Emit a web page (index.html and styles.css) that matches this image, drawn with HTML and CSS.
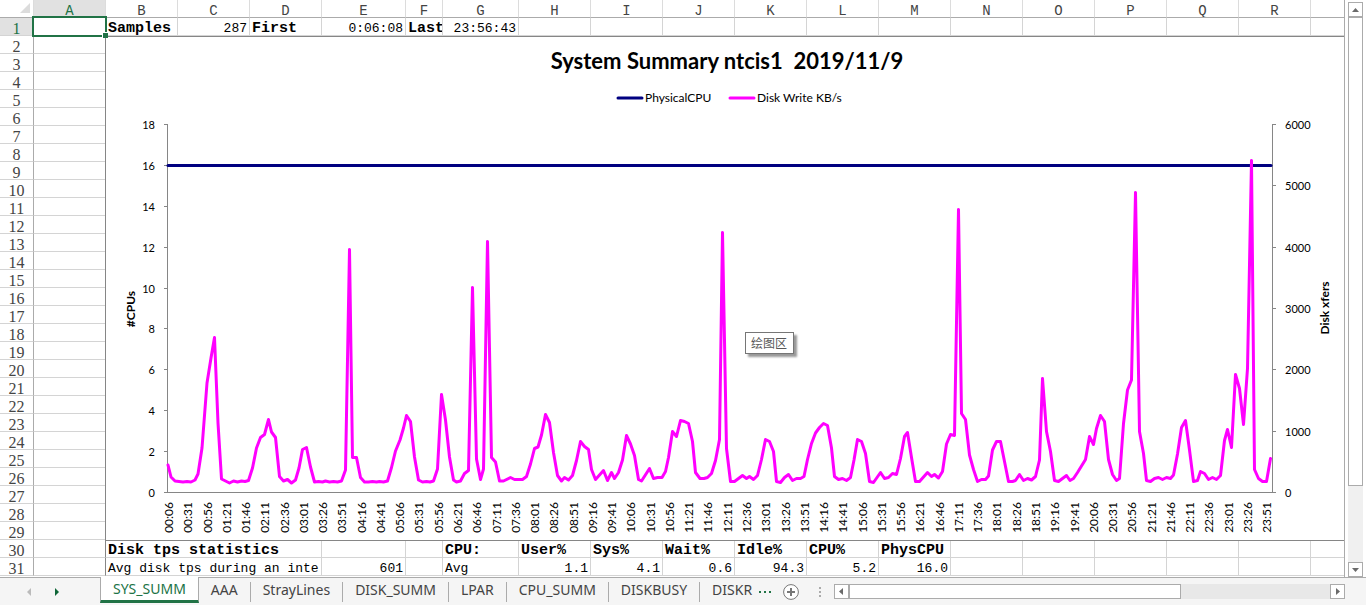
FILE: index.html
```html
<!DOCTYPE html>
<html lang="en">
<head>
<meta charset="utf-8">
<title>System Summary</title>
<link rel="stylesheet" href="styles.css">
</head>
<body>
<main class="workspace">
  <div class="sheet">
    <table class="grid">
      <colgroup>
        <col class="col-head"><col class="col"><col class="col"><col class="col"><col class="col">
        <col class="col-e"><col class="col-f"><col class="col-g">
        <col class="col"><col class="col"><col class="col"><col class="col"><col class="col"><col class="col">
        <col class="col"><col class="col"><col class="col"><col class="col"><col class="col"><col>
      </colgroup>
      <thead>
        <tr>
          <th class="corner"><svg class="corner-mark" viewBox="0 0 10 10" aria-hidden="true"><path d="M10 0V10H0Z"/></svg></th>
          <th class="active">A</th><th>B</th><th>C</th><th>D</th><th>E</th><th>F</th><th>G</th><th>H</th><th>I</th><th>J</th><th>K</th><th>L</th><th>M</th><th>N</th><th>O</th><th>P</th><th>Q</th><th>R</th><th></th>
        </tr>
      </thead>
      <tbody>
        <tr>
          <th class="active">1</th><td class="selected"><span class="selection"></span></td>
          <td class="bold">Samples</td><td class="num">287</td><td class="bold">First</td><td class="num">0:06:08</td><td class="bold">Last</td><td class="num">23:56:43</td>
          <td></td><td></td><td></td><td></td><td></td><td></td><td></td><td></td><td></td><td></td><td></td><td></td>
        </tr>
        <tr>
          <th>2</th><td></td>
          <td class="chart-cell" rowspan="28" colspan="18">
            <div class="chart">
              <svg class="plot" viewBox="106 37 1238 503" role="img" aria-label="System Summary chart">
                <text class="title" x="727" y="69">System Summary ntcis1  2019/11/9</text>
                <path class="cpu" d="M618 98H642"/>
                <text class="label" x="645" y="102">PhysicalCPU</text>
                <path class="disk" d="M730 98H754"/>
                <text class="label" x="757" y="102">Disk Write KB/s</text>
                <path class="axis" d="M167.500 124.500V492.500M1272.500 124.500V492.500M164 492.500H1276"/>
                <g id="ticks"></g>
                <text class="axis-title" transform="translate(135 309) rotate(-90)">#CPUs</text>
                <text class="axis-title" transform="translate(1329 308) rotate(-90)">Disk xfers</text>
                <path class="cpu" d="M168 165.500H1271"/>
                <polyline class="disk" points="168,465 171,477 175,481 179,481.5 183,482 187,481.5 191,482 195,480 198,474 202,448 207,383 211,358 214.5,337.5 218,423 221.5,479 225.5,481 229.5,483 233.5,481 237.5,482 241.5,481 245,481.5 248.5,480.5 252.5,468 256.5,448 260.5,437.5 264.5,434.5 268.5,419.5 271.5,432 275.5,437.5 279.5,476.5 283.5,481 287.5,479.5 291.5,483 295.5,480 299,468 302.5,449.5 306.5,447.5 310.5,467 314.5,482 318.5,481.5 322.5,482 325.5,481 329.5,482 333.5,481.5 337.5,482 341.5,481 345.5,470 349.5,249.5 352.5,457.5 356.5,457.5 360.5,477.5 364.5,482 368.5,482 372.5,481.5 376.5,482 379.5,481.5 383.5,482 387.5,481 391.5,467.5 395.5,451 400,440 403.5,428 406.5,415.5 410.5,421.5 414.5,457 418.5,480 422.5,482 426.5,481.5 430,482 433.5,481 437.5,469 441.5,394.5 445.5,420 449.5,457 453.5,480 456.5,482 460.5,481 464.5,473.5 468.5,470.5 472.5,287.5 476.5,459 480.5,479.5 483.5,469 487.500,241.5 491.5,457.5 495.5,462 499.5,481 503.5,481 510.5,477.5 514.5,479.5 522.5,479.5 526.5,476.5 530.5,464 534.5,448.5 538,447 541.5,435 545.5,414.5 549.5,422.5 553.5,452.5 557.5,475.5 561.5,481 564.5,477.5 568.5,480 572.5,475.5 576.5,460.5 580.5,441.5 584.5,446.5 588.5,449.5 591.5,469.5 595.5,479.5 603.5,470.5 607.5,480.5 611.5,472.5 614.5,478.5 618.5,472.5 622.5,460 626.5,435.5 630.5,444 634.5,455.5 638.5,479.5 641.5,481 649.5,468.5 653.5,478.5 657.5,477.5 662,477.5 665.5,471.5 668.5,457.5 672.5,431.5 676.5,436.5 680.5,420.5 684.5,421.5 688.5,423.5 692.5,441.5 695.5,472.5 700,478.5 704,478.5 707.5,477.5 711.5,473.5 715.5,460.5 719.5,439.5 722.5,232.5 726.5,448.5 730.5,481.5 734.5,481.5 742.5,475.5 746.5,478.5 749.5,476.5 753.5,479.5 757.5,475.5 761.5,459.5 765.5,439.5 769.5,441.5 773.5,451.5 776.5,481.5 780.5,482.5 784.5,477.5 788.5,474.5 792.5,480.5 796.5,478.5 800.5,478.5 804,476.5 807.5,459.5 811.5,443.5 815.5,433 819.5,427.5 823.5,423.5 827.5,425.5 831.5,448 834.5,476.5 838.5,479.5 842.5,478.5 846.5,480.5 850.5,477.5 854,460 857.5,439.5 861.5,441.5 865.5,453.5 869.5,481.5 873.5,482.5 880.5,472.5 884.5,478.5 888.5,477.5 892.5,473.5 896.5,474.5 900.5,458.5 904.5,436.5 907.5,432.5 911.5,457.5 915.5,481.5 919.5,481.5 927.5,472.5 931.5,476.5 934.5,474.5 938.5,478 942.5,471.5 946.5,444 950.5,434.5 954.5,435.5 958.5,209.5 961.5,413.5 965.5,419.5 969.5,455 973.5,469.5 977.5,481.5 981.5,479.5 985.5,479.5 988.5,476 992.5,450 996.5,441.5 1000.5,441.5 1004.5,461.5 1008.5,481.5 1012.5,481.5 1015.5,480.5 1019.5,474.5 1023.5,480.5 1027.5,478.5 1031.5,480 1035.5,476.5 1039.5,460 1042.5,378.5 1046.5,431.5 1050.5,451.5 1054.5,480.5 1058.5,481.5 1066.5,475.5 1070,480.5 1073.5,478.5 1077.5,472.5 1085.5,459.5 1089.5,436.5 1093.5,444.5 1096.5,428.5 1100.5,415.5 1104.5,421.5 1108.5,459.5 1112.5,474.5 1116.5,480.5 1119.5,478.5 1123.5,423.5 1127.5,390 1131.5,380 1135.5,192.5 1139.5,431.5 1143.5,453.5 1146.5,480.5 1150.5,481.5 1154.5,478.5 1158.5,477.5 1162.5,479.5 1166.5,477.5 1170.5,478.5 1173.5,475 1177.5,454 1181.5,427.5 1185.5,420.5 1189.5,450 1193.5,481.5 1197.5,480.5 1200.5,471.5 1204.5,473.5 1208.5,479.5 1212.5,477.5 1216.5,479.5 1220.5,475.5 1224.5,440.5 1227.5,429.5 1231.5,447.5 1235.5,374.5 1239.5,388.5 1243.5,424.5 1247.5,368.5 1251.5,160.5 1254.5,469.5 1258.5,478.5 1262.5,481.5 1266.5,481.5 1270.5,458.5"/>
              </svg>
              <div class="tooltip" role="tooltip" lang="zh">绘图区</div>
            </div>
          </td>
        </tr>
        <tr><th>3</th><td></td></tr>
        <tr><th>4</th><td></td></tr>
        <tr><th>5</th><td></td></tr>
        <tr><th>6</th><td></td></tr>
        <tr><th>7</th><td></td></tr>
        <tr><th>8</th><td></td></tr>
        <tr><th>9</th><td></td></tr>
        <tr><th>10</th><td></td></tr>
        <tr><th>11</th><td></td></tr>
        <tr><th>12</th><td></td></tr>
        <tr><th>13</th><td></td></tr>
        <tr><th>14</th><td></td></tr>
        <tr><th>15</th><td></td></tr>
        <tr><th>16</th><td></td></tr>
        <tr><th>17</th><td></td></tr>
        <tr><th>18</th><td></td></tr>
        <tr><th>19</th><td></td></tr>
        <tr><th>20</th><td></td></tr>
        <tr><th>21</th><td></td></tr>
        <tr><th>22</th><td></td></tr>
        <tr><th>23</th><td></td></tr>
        <tr><th>24</th><td></td></tr>
        <tr><th>25</th><td></td></tr>
        <tr><th>26</th><td></td></tr>
        <tr><th>27</th><td></td></tr>
        <tr><th>28</th><td></td></tr>
        <tr><th>29</th><td></td></tr>
        <tr>
          <th>30</th><td></td><td class="bold" colspan="3">Disk tps statistics</td><td></td><td></td>
          <td class="bold">CPU:</td><td class="bold">User%</td><td class="bold">Sys%</td><td class="bold">Wait%</td><td class="bold">Idle%</td><td class="bold">CPU%</td><td class="bold">PhysCPU</td>
          <td></td><td></td><td></td><td></td><td></td><td></td>
        </tr>
        <tr>
          <th>31</th><td></td><td colspan="3">Avg disk tps during an inte</td><td class="num">601</td><td></td>
          <td>Avg</td><td class="num">1.1</td><td class="num">4.1</td><td class="num">0.6</td><td class="num">94.3</td><td class="num">5.2</td><td class="num">16.0</td>
          <td></td><td></td><td></td><td></td><td></td><td></td>
        </tr>
      </tbody>
    </table>
  </div>
  <div class="vscroll">
    <button class="arrow" aria-label="Scroll up"><svg viewBox="0 0 7 4"><path d="M0 4L3.500 0L7 4Z"/></svg></button>
    <div class="vtrack"><div class="vthumb"></div></div>
    <button class="arrow" aria-label="Scroll down"><svg viewBox="0 0 7 4"><path d="M0 0L3.500 4L7 0Z"/></svg></button>
  </div>
</main>
<footer class="tabbar">
  <div class="tab-nav">
    <button class="nav-arrow" aria-label="Previous sheets" disabled><svg viewBox="0 0 4 8"><path d="M4 0L0 4L4 8Z"/></svg></button>
    <button class="nav-arrow" aria-label="Next sheets"><svg viewBox="0 0 4 8"><path d="M0 0L4 4L0 8Z"/></svg></button>
  </div>
  <nav class="tabs">
    <button class="tab current">SYS_SUMM</button>
    <button class="tab">AAA</button>
    <button class="tab">StrayLines</button>
    <button class="tab">DISK_SUMM</button>
    <button class="tab">LPAR</button>
    <button class="tab">CPU_SUMM</button>
    <button class="tab">DISKBUSY</button>
    <button class="tab">DISKR</button>
  </nav>
  <button class="more" aria-label="More sheets"><svg viewBox="0 0 12 2"><path d="M0 0h2v2h-2zM5 0h2v2h-2zM10 0h2v2h-2z"/></svg></button>
  <button class="add" aria-label="New sheet"><svg viewBox="0 0 16 16"><circle cx="8" cy="8" r="7.400"/><path d="M8 4V12M4 8H12"/></svg></button>
  <svg class="grip" viewBox="0 0 2 10" aria-hidden="true"><path d="M0 0h2v2h-2zM0 4h2v2h-2zM0 8h2v2h-2z"/></svg>
  <div class="hscroll">
    <button class="arrow" aria-label="Scroll left"><svg class="side" viewBox="0 0 4 7"><path d="M4 0L0 3.500L4 7Z"/></svg></button>
    <div class="htrack"><div class="hthumb"></div></div>
    <button class="arrow" aria-label="Scroll right"><svg class="side" viewBox="0 0 4 7"><path d="M0 0L4 3.500L0 7Z"/></svg></button>
  </div>
</footer>
<script src="chart.js"></script>
</body>
</html>
```

FILE: styles.css
```css
* { box-sizing: border-box; }

body {
  margin: 0;
  height: 100vh;
  display: flex;
  flex-direction: column;
  overflow: hidden;
  background: #fff;
  color: #000;
  font-family: "Liberation Mono", monospace;
}

button {
  margin: 0;
  padding: 0;
  border: 0;
  background: none;
  font: inherit;
}

.workspace { flex: 1; min-height: 0; display: flex; }

.sheet {
  flex: 1;
  min-width: 0;
  overflow: hidden;
  border-right: 1px solid #ababab;
}

/* Cell grid */
.grid {
  width: 100%;
  table-layout: fixed;
  border-collapse: separate;
  border-spacing: 0;
}
.col-head { width: 34px; }
.col { width: 72px; }
.col-e { width: 84px; }
.col-f { width: 37px; }
.col-g { width: 76px; }

.grid tr { height: 18px; }
.grid th, .grid td {
  height: 18px;
  padding: 4px 2px 0;
  overflow: hidden;
  white-space: nowrap;
  line-height: 13px;
  vertical-align: middle;
  border-right: 1px solid #d4d4d4;
  border-bottom: 1px solid #d4d4d4;
}
.grid td { font-size: 13px; text-align: left; }
.grid tr > :last-child:not(:nth-child(2)) { border-right: 0; }
.grid td.bold { padding-right: 0; font-size: 15px; font-weight: bold; }
.grid td.num { text-align: right; }

.grid thead th {
  padding-top: 5px;
  line-height: 12px;
  font-size: 14px;
  font-weight: normal;
  color: #444;
  border-bottom-color: #ababab;
  border-right: 1px solid #dcdcdc;
}
.grid tbody th {
  font-family: "Liberation Serif", serif;
  font-size: 16px;
  font-weight: normal;
  color: #444;
  text-align: center;
  border-right-color: #ababab;
}
.grid td:nth-child(2) { border-right-color: #868686; }
.grid th.active { background: #e1e1e1; color: #217346; }
.grid th.corner { text-align: right; padding: 0 3px 0 0; }
.corner-mark { display: inline-block; width: 10px; height: 10px; fill: #dcdcdc; }

.grid td.selected { position: relative; overflow: visible; }
.selection {
  position: absolute;
  inset: -2px;
  z-index: 2;
  border: 2px solid #217346;
}
.selection::after {
  content: "";
  position: absolute;
  right: -3px;
  bottom: -3px;
  width: 5px;
  height: 5px;
  background: #217346;
  border-top: 1px solid #fff;
  border-left: 1px solid #fff;
}

/* Chart floating over the cells */
.grid td.chart-cell { position: relative; padding: 0; overflow: visible; border: 0; }
.chart {
  position: absolute;
  inset: 0 0 -1px -1px;
  background: #fff;
  border: solid #868686;
  border-width: 1px 0 1px 1px;
}
.plot {
  display: block;
  width: 100%;
  height: 100%;
  font-family: Lato, sans-serif;
  font-size: 11px;
}
.title { font-size: 22px; font-weight: bold; text-anchor: middle; white-space: pre; }
.label, .time { font-size: 12px; }
.axis-title { font-size: 12px; font-weight: bold; text-anchor: middle; }
.end, .time { text-anchor: end; }
.axis { fill: none; stroke: #868686; stroke-width: 1; }
.cpu, .disk {
  fill: none;
  stroke-width: 3;
  stroke-linecap: round;
  stroke-linejoin: round;
}
.cpu { stroke: #000080; }
.disk { stroke: #f0f; }
.tooltip {
  position: absolute;
  left: 639px;
  top: 295px;
  padding: 0 6px 0 5px;
  border: 1px solid #767676;
  background: #fff;
  box-shadow: 3px 3px 2px #999;
  color: #575757;
  font: 12px/20px "Noto Sans CJK SC", sans-serif;
}

/* Scroll bars */
.arrow {
  flex: none;
  width: 15px;
  height: 15px;
  display: flex;
  align-items: center;
  justify-content: center;
  border: 1px solid #ababab;
  background: #fff;
}
.arrow svg { width: 7px; height: 4px; fill: #6a6a6a; }
.arrow .side { width: 4px; height: 7px; }
.vscroll {
  flex: none;
  width: 21px;
  padding: 2px 3px 0;
  display: flex;
  flex-direction: column;
}
.vtrack { flex: 1; background: #f0f0f0; }
.vthumb { height: 86%; border: 1px solid #ababab; background: #fff; }

/* Sheet tabs */
.tabbar {
  flex: none;
  height: 28px;
  display: flex;
  align-items: center;
  padding-right: 21px;
  border-top: 1px solid #ababab;
  background: #f5f5f5;
  font-family: "Noto Sans", sans-serif;
  font-size: 14px;
  color: #444;
}
.tab-nav { width: 100px; padding-left: 27px; display: flex; gap: 24px; }
.nav-arrow { width: 4px; height: 8px; display: flex; color: #0e6637; }
.nav-arrow:disabled { color: #bbb; }
.nav-arrow svg { width: 4px; height: 8px; fill: currentColor; }
.tabs { align-self: flex-start; display: flex; }
.tab {
  height: 25px;
  padding: 0 13px 2px 12px;
  color: #444;
  line-height: 22px;
  white-space: nowrap;
  background: linear-gradient(#ababab, #ababab) right 4px / 1px 20px no-repeat;
}
.tab:last-child { padding-right: 7px; background: none; }
.tab.current {
  margin-top: -1px;
  height: 26px;
  padding: 0 12px;
  background: #fff;
  border: solid #ababab;
  border-width: 0 1px;
  border-bottom: 3px solid #217346;
  color: #217346;
}
.more { width: 12px; display: flex; }
.more svg { width: 12px; height: 2px; fill: #217346; }
.add { margin-left: 12px; display: flex; }
.add svg { width: 16px; height: 16px; fill: #fff; stroke: #777; }
.add path { stroke-width: 2; }
.grip { margin-left: 20px; width: 2px; height: 10px; fill: #ababab; }
.hscroll { flex: none; width: 38%; margin-left: auto; display: flex; }
.htrack { flex: 1; background: #e8e8e8; }
.hthumb { width: 69%; height: 15px; border: 1px solid #ababab; background: #fff; }
```

FILE: chart.js
```js
const ns = "http://www.w3.org/2000/svg";
const ticks = document.getElementById("ticks");
const plot = { left: 168, right: 1272, top: 124, bottom: 492 };

function add(name, attrs, text) {
  const el = document.createElementNS(ns, name);
  for (const key in attrs) el.setAttribute(key, attrs[key]);
  if (text !== undefined) el.textContent = text;
  ticks.appendChild(el);
}

function yAt(value, max) {
  return Math.round(plot.bottom - (plot.bottom - plot.top) * value / max);
}

for (let v = 0; v <= 18; v += 2) {
  const y = yAt(v, 18);
  add("path", { class: "axis", d: `M164 ${y + 0.5}H168` });
  add("text", { class: "end", x: 155, y: y + 5 }, v);
}

for (let v = 0; v <= 6000; v += 1000) {
  const y = yAt(v, 6000);
  add("path", { class: "axis", d: `M1272 ${y + 0.5}H1276` });
  add("text", { x: 1285, y: y + 5 }, v);
}

// One time label for every fifth five-minute sample.
for (let i = 0; i < 58; i++) {
  const minutes = 6 + i * 25;
  const label = String(Math.floor(minutes / 60)).padStart(2, "0") + ":" + String(minutes % 60).padStart(2, "0");
  const x = 173 + i * (plot.right - plot.left) * 5 / 286.5;
  add("text", { class: "time", transform: `translate(${x} 502) rotate(-90)` }, label);
}
```
